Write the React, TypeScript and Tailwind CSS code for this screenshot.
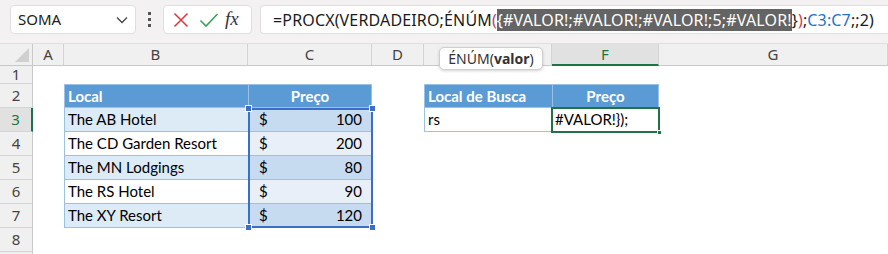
import React from "react";

const ui = { fontFamily: '"Noto Sans", "Open Sans", sans-serif' };
const cellFont = { fontFamily: 'Lato, "Liberation Sans", sans-serif' };

function ColHead({ w, label, active }: { w: string; label: string; active?: boolean }) {
  return (
    <div
      className={`${w} h-full shrink-0 flex items-center justify-center border-r border-[#d4d4d4] text-[15px] ${
        active ? "bg-[#e1e1e1] text-[#217346] border-b-2 border-b-[#217346]" : "text-[#444] border-b border-b-[#c8c8c8]"
      }`}
    >
      {label}
    </div>
  );
}

function RowHead({ n, active }: { n?: number; active?: boolean }) {
  return (
    <div
      className={`w-[33px] h-full shrink-0 flex items-center justify-center border-b border-[#d4d4d4] text-[15px] ${
        active ? "bg-[#e1e1e1] text-[#217346] border-r-2 border-r-[#217346]" : "bg-[#f0f0f0] text-[#444] border-r border-r-[#c8c8c8]"
      }`}
      style={ui}
    >
      {n}
    </div>
  );
}

type Row = { local: string; price: string; band: boolean };
const rows: Row[] = [
  { local: "The AB Hotel", price: "100", band: true },
  { local: "The CD Garden Resort", price: "200", band: false },
  { local: "The MN Lodgings", price: "80", band: true },
  { local: "The RS Hotel", price: "90", band: false },
  { local: "The XY Resort", price: "120", band: true },
];

export default function App() {
  return (
    <div className="relative w-[888px] h-[254px] overflow-hidden bg-white text-black">
      {/* Formula bar */}
      <div className="h-[43px] bg-[#f3f1f1] flex items-start pt-[5px]" style={ui}>
        <div className="ml-[10px] w-[126px] h-[29px] bg-white border border-[#e2dede] rounded-[4px] flex items-center pl-[7px] pr-[7px] justify-between">
          <span className="text-[15px] text-[#222]">SOMA</span>
          <svg width="12" height="8" viewBox="0 0 12 8">
            <path d="M1 1.5 L6 6.5 L11 1.5" fill="none" stroke="#444" strokeWidth="1.3" />
          </svg>
        </div>
        <div className="w-[27px] h-[29px] flex flex-col items-center justify-center gap-[3px]">
          <div className="w-[3px] h-[3px] bg-[#555]" />
          <div className="w-[3px] h-[3px] bg-[#555]" />
          <div className="w-[3px] h-[3px] bg-[#555]" />
        </div>
        <div className="w-[89px] h-[29px] bg-white border border-[#e2dede] rounded-[4px] flex items-center">
          <svg width="16" height="16" viewBox="0 0 16 16" className="ml-[9px]">
            <path d="M1.5 1.5 L14.5 14.5 M14.5 1.5 L1.5 14.5" stroke="#e2363a" strokeWidth="1.5" />
          </svg>
          <svg width="20" height="16" viewBox="0 0 20 16" className="ml-[10px]">
            <path d="M1.5 8.5 L7 14 L18.5 2" fill="none" stroke="#3da35a" strokeWidth="1.6" />
          </svg>
          <span
            className="ml-[6px] text-[19px] italic text-[#333]"
            style={{ fontFamily: '"Liberation Serif", "DejaVu Serif", serif' }}
          >
            fx
          </span>
        </div>
        <div
          className="ml-[8px] flex-1 h-[29px] bg-white border border-[#e2dede] border-r-0 rounded-l-[4px] flex items-center pl-[12px] text-[16px] tracking-[0.15px] whitespace-nowrap text-[#1b1b1b]"
        >
          <span>=PROCX(VERDADEIRO;ÉNÚM</span>
          <span className="text-[#d23b5a]">(</span>
          <span className="bg-[#646464] text-white h-[22px] flex items-center">
            {"{#VALOR!;#VALOR!;#VALOR!;5;#VALOR!"}
          </span>
          <span>{"}"}</span>
          <span className="text-[#d23b5a]">)</span>
          <span>;</span>
          <span className="text-[#1e73cc]">C3:C7</span>
          <span>;;2)</span>
        </div>
      </div>

      {/* Column headers */}
      <div className="h-[23px] flex bg-[#f0f0f0] border-t border-[#e0e0e0]" style={ui}>
        <div className="w-[33px] h-full shrink-0 border-r border-b border-[#c8c8c8] relative">
          <svg width="14" height="14" viewBox="0 0 14 14" className="absolute right-[3px] bottom-[3px]">
            <path d="M14 0 L14 14 L0 14 Z" fill="#d0d0d0" />
          </svg>
        </div>
        <ColHead w="w-[31px]" label="A" />
        <ColHead w="w-[184px]" label="B" />
        <ColHead w="w-[124px]" label="C" />
        <ColHead w="w-[52px]" label="D" />
        <ColHead w="w-[128px]" label="" />
        <ColHead w="w-[107px]" label="F" active />
        <ColHead w="flex-1" label="G" />
      </div>

      {/* Row 1 */}
      <div className="h-[18px] flex">
        <RowHead n={1} />
      </div>

      {/* Row 2 */}
      <div className="h-[24px] flex" style={cellFont}>
        <RowHead n={2} />
        <div className="w-[31px] shrink-0" />
        <div className="w-[184px] shrink-0 bg-[#5b9bd5] border border-[#9bc2e6] border-r-0 flex items-center pl-[3px] text-white font-bold text-[15px]">
          Local
        </div>
        <div className="w-[124px] shrink-0 bg-[#5b9bd5] border border-[#9bc2e6] flex items-center justify-center text-white font-bold text-[15px]">
          Preço
        </div>
        <div className="w-[52px] shrink-0" />
        <div className="w-[128px] shrink-0 bg-[#5b9bd5] border border-[#9bc2e6] border-r-0 flex items-center pl-[3px] text-white font-bold text-[15px] whitespace-nowrap">
          Local de Busca
        </div>
        <div className="w-[107px] shrink-0 bg-[#5b9bd5] border border-[#9bc2e6] flex items-center justify-center text-white font-bold text-[15px]">
          Preço
        </div>
      </div>

      {/* Rows 3-7 */}
      {rows.map((r, i) => (
        <div key={i} className="h-[24px] flex" style={cellFont}>
          <RowHead n={i + 3} active={i === 0} />
          <div className="w-[31px] shrink-0" />
          <div
            className={`w-[184px] shrink-0 border-l border-b border-[#9bc2e6] flex items-center pl-[3px] text-[15px] ${
              r.band ? "bg-[#ddebf7]" : "bg-white"
            }`}
          >
            {r.local}
          </div>
          <div
            className={`w-[124px] shrink-0 border-l border-r border-b border-[#9bc2e6] flex items-center justify-between pl-[10px] pr-[9px] text-[15px] ${
              r.band ? "bg-[#c6daf0]" : "bg-[#e9eff8]"
            }`}
          >
            <span>$</span>
            <span>{r.price}</span>
          </div>
          {i === 0 && (
            <>
              <div className="w-[52px] shrink-0" />
              <div className="w-[128px] shrink-0 border-l border-b border-[#9bc2e6] bg-white flex items-center pl-[3px] text-[15px]">
                rs
              </div>
              <div className="w-[107px] shrink-0 border-l border-r border-b border-[#9bc2e6] bg-white flex items-center pl-[2px] text-[15px]">
                {"#VALOR!});"}
              </div>
            </>
          )}
        </div>
      ))}

      {/* Row 8 & partial 9 */}
      <div className="h-[24px] flex">
        <RowHead n={8} />
      </div>
      <div className="h-[24px] flex">
        <RowHead />
      </div>

      {/* Selection C3:C7 */}
      <div className="absolute left-[248px] top-[108px] w-[125px] h-[120px] border-2 border-[#3b6fc6] pointer-events-none" />
      <div className="absolute left-[245px] top-[105px] w-[7px] h-[7px] bg-[#3b6fc6] border border-white" />
      <div className="absolute left-[369px] top-[105px] w-[7px] h-[7px] bg-[#3b6fc6] border border-white" />
      <div className="absolute left-[245px] top-[224px] w-[7px] h-[7px] bg-[#3b6fc6] border border-white" />
      <div className="absolute left-[369px] top-[224px] w-[7px] h-[7px] bg-[#3b6fc6] border border-white" />

      {/* Active cell F3 */}
      <div className="absolute left-[551px] top-[107px] w-[109px] h-[26px] border-2 border-[#217346] pointer-events-none" />
      <div className="absolute left-[657px] top-[130px] w-[5px] h-[5px] bg-[#217346] border border-white" />

      {/* Tooltip */}
      <div
        className="absolute left-[439px] top-[47px] w-[104px] h-[23px] bg-white border border-[#cfcfcf] rounded-[5px] shadow-[0_1px_3px_rgba(0,0,0,0.18)] flex items-center justify-center text-[14px] text-[#333]"
        style={ui}
      >
        <span>ÉNÚM(</span>
        <span className="font-bold">valor</span>
        <span>)</span>
      </div>
    </div>
  );
}
